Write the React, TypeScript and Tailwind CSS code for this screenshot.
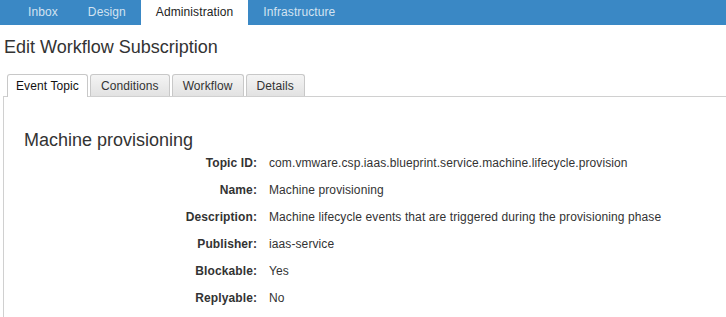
import React from "react";

const navItems = ["Inbox", "Design", "Administration", "Infrastructure"];
const tabs = ["Event Topic", "Conditions", "Workflow", "Details"];
const rows: [string, string][] = [
  ["Topic ID:", "com.vmware.csp.iaas.blueprint.service.machine.lifecycle.provision"],
  ["Name:", "Machine provisioning"],
  ["Description:", "Machine lifecycle events that are triggered during the provisioning phase"],
  ["Publisher:", "iaas-service"],
  ["Blockable:", "Yes"],
  ["Replyable:", "No"],
];

export default function App() {
  return (
    <div
      className="w-[726px] h-[317px] overflow-hidden bg-white text-[#333333] tracking-[0.1px]"
      style={{ fontFamily: '"Liberation Sans", Arial, sans-serif' }}
    >
      <div className="flex h-[25px] bg-[#3a88c5] pl-[13px] text-[12px] leading-[25px]">
        {navItems.map((n) => (
          <div
            key={n}
            className={
              n === "Administration"
                ? "px-[15px] bg-white text-[#222222]"
                : "px-[15px] text-[#d3e3f1]"
            }
          >
            {n}
          </div>
        ))}
      </div>

      <div className="mt-[12px] pl-[4px] text-[18px] leading-[20px] text-[#333333] tracking-normal">
        Edit Workflow Subscription
      </div>

      <div className="mt-[17px] ml-[3px] flex gap-[2px] border-b border-[#d0d0d0] pl-[4px]">
        {tabs.map((t, i) =>
          i === 0 ? (
            <div
              key={t}
              className="mb-[-1px] h-[23px] rounded-t-[3px] border border-b-0 border-[#c8c8c8] bg-white px-[8px] pt-[4px] text-[12px] leading-[14px] text-[#111111]"
            >
              {t}
            </div>
          ) : (
            <div
              key={t}
              className="h-[22px] rounded-t-[3px] border border-b-0 border-[#c8c8c8] bg-gradient-to-b from-[#f4f4f4] to-[#e2e2e2] px-[10px] pt-[4px] text-[12px] leading-[14px] text-[#333333]"
            >
              {t}
            </div>
          )
        )}
      </div>

      <div className="ml-[3px] h-[300px] border-l border-[#d0d0d0] pt-[33px]">
        <div className="pl-[20px] text-[18px] leading-[20px] text-[#333333] tracking-normal">
          Machine provisioning
        </div>
        <div className="grid grid-cols-[253px_1fr] text-[12px] leading-[27px]">
          {rows.map(([k, v]) => (
            <React.Fragment key={k}>
              <div className="text-right font-bold text-[#333333]">{k}</div>
              <div className="pl-[12px] text-[#333333] whitespace-nowrap">{v}</div>
            </React.Fragment>
          ))}
        </div>
      </div>
    </div>
  );
}
